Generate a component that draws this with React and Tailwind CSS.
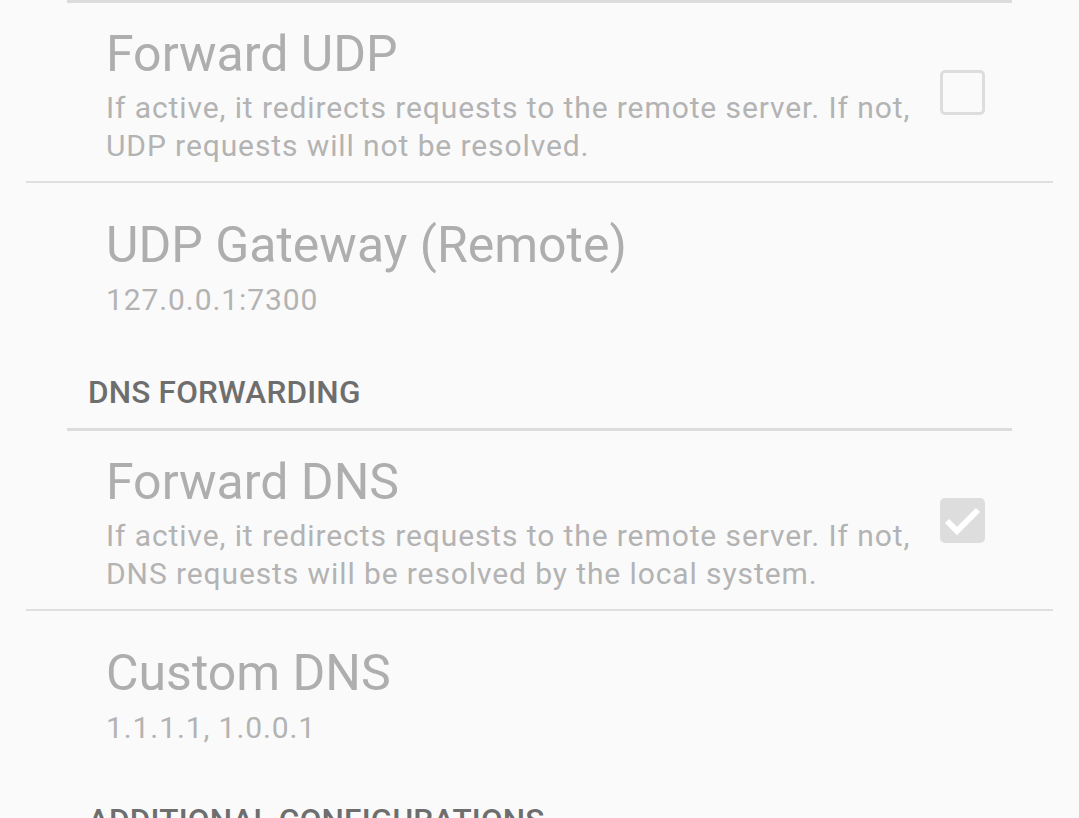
import React from "react";

function Checkbox({ checked }) {
  if (checked) {
    return (
      <div className="w-[45px] h-[45px] rounded-[5px] bg-[#dddddd] flex items-center justify-center shrink-0">
        <svg width="45" height="45" viewBox="0 0 45 45">
          <path d="M7 23 L17 33 L38 12" fill="none" stroke="#ffffff" strokeWidth="6" strokeLinecap="butt" strokeLinejoin="miter" />
        </svg>
      </div>
    );
  }
  return <div className="w-[45px] h-[45px] rounded-[5px] border-[3px] border-[#dddddd] shrink-0" />;
}

function CheckItem({ title, lines, checked }) {
  return (
    <div className="h-[178px] flex items-center pl-[106px] pr-[94px]">
      <div className="flex-1 pt-[23px] pb-[17px] self-stretch">
        <div className="text-[50px] leading-[56px] text-[#aeaeae] whitespace-nowrap">{title}</div>
        <div className="mt-[7px] text-[30px] leading-[38px] tracking-[0.9px] text-[#b3b3b3]">
          {lines.map((l, i) => (
            <div key={i} className="whitespace-nowrap">{l}</div>
          ))}
        </div>
      </div>
      <Checkbox checked={checked} />
    </div>
  );
}

function TextItem({ title, summary }) {
  return (
    <div className="pl-[106px] pt-[34px]">
      <div className="text-[50px] leading-[56px] text-[#aeaeae] whitespace-nowrap">{title}</div>
      <div className="mt-[8px] text-[30px] leading-[38px] tracking-[0.9px] text-[#b3b3b3] whitespace-nowrap">{summary}</div>
    </div>
  );
}

function Header({ children }) {
  return (
    <div className="pl-[88px] mt-[56px] text-[31.5px] leading-[36px] tracking-[0.2px] font-medium text-[#6e6e6e] whitespace-nowrap">
      {children}
    </div>
  );
}

export default function App() {
  return (
    <div
      className="w-[1079px] h-[818px] overflow-hidden bg-[#fafafa]"
      style={{ fontFamily: "Roboto, 'Noto Sans', sans-serif" }}
    >
      <div className="h-[3px] mx-[67px] bg-[#dcdcdc]" />
      <CheckItem
        title="Forward UDP"
        lines={[
          "If active, it redirects requests to the remote server. If not,",
          "UDP requests will not be resolved.",
        ]}
        checked={false}
      />
      <div className="h-[2px] mx-[26px] bg-[#dfdfdf]" />
      <TextItem title="UDP Gateway (Remote)" summary="127.0.0.1:7300" />
      <Header>DNS FORWARDING</Header>
      <div className="mt-[17px] h-[3px] mx-[67px] bg-[#dcdcdc]" />
      <CheckItem
        title="Forward DNS"
        lines={[
          "If active, it redirects requests to the remote server. If not,",
          "DNS requests will be resolved by the local system.",
        ]}
        checked={true}
      />
      <div className="h-[2px] mx-[26px] bg-[#dfdfdf]" />
      <TextItem title="Custom DNS" summary="1.1.1.1, 1.0.0.1" />
      <Header>ADDITIONAL CONFIGURATIONS</Header>
    </div>
  );
}
